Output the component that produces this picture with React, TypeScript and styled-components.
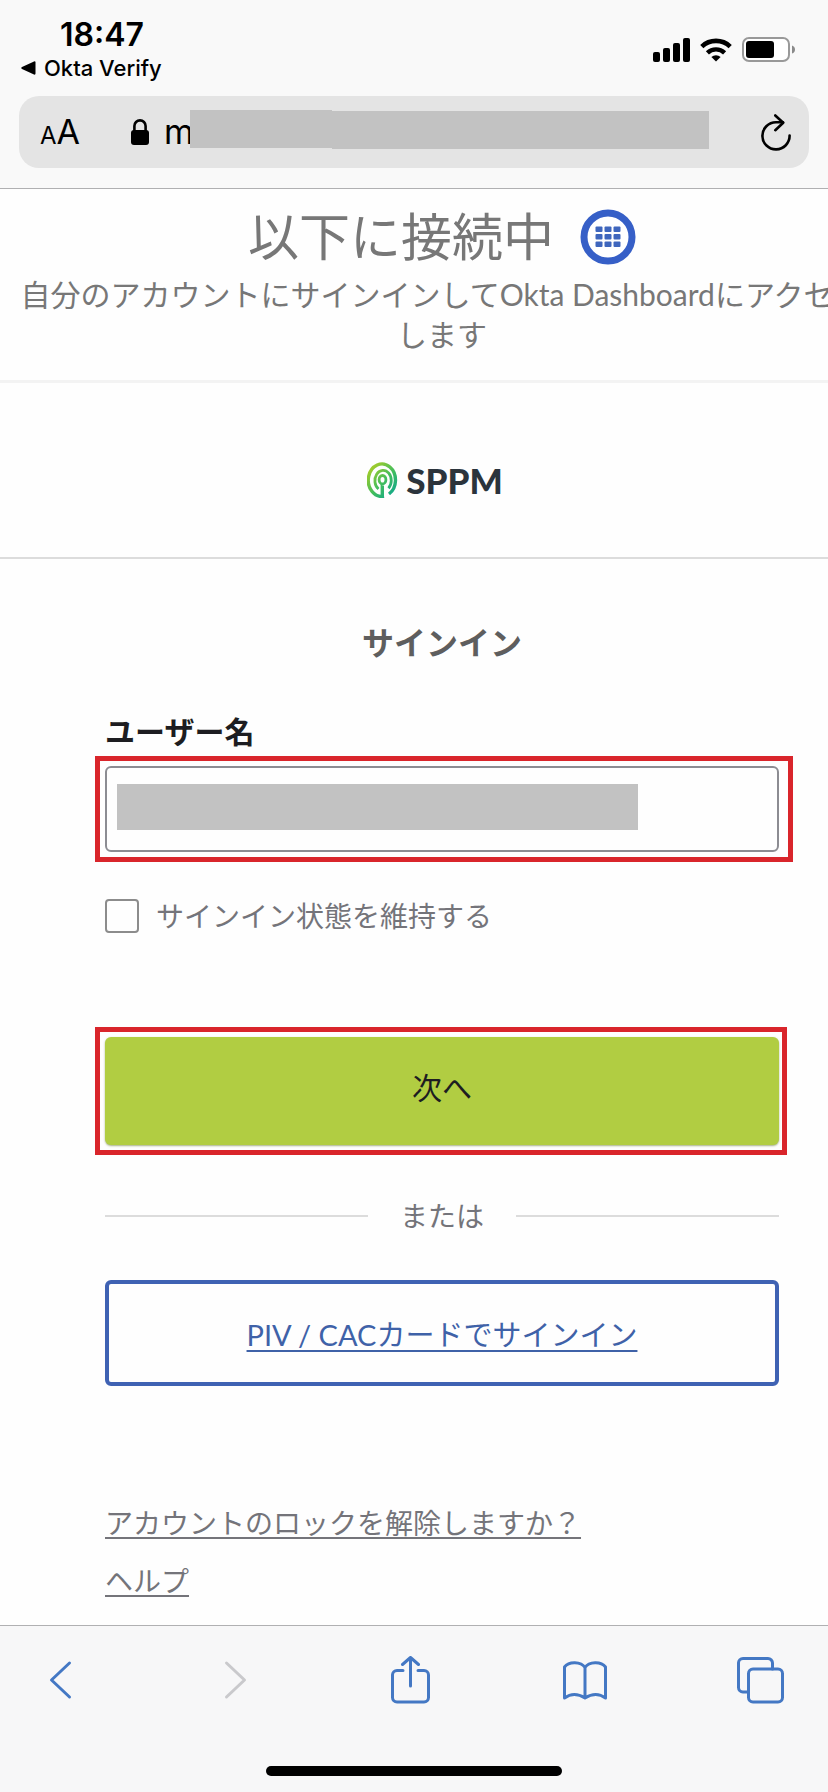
import React from "react";
import styled, { createGlobalStyle } from "styled-components";

const GlobalStyle = createGlobalStyle`
  *, *::before, *::after { box-sizing: border-box; }
  body {
    margin: 0;
    background: #fefefe;
    font-family: Lato, "Noto Sans CJK JP", sans-serif;
    overflow-x: hidden;
  }
  h1, h2, p { margin: 0; font-weight: 400; }
`;

const systemFont = `Inter, "Noto Sans CJK JP", sans-serif`;

const Screen = styled.div`
  display: flex;
  flex-direction: column;
  min-height: 100vh;
  overflow: hidden;
`;

/* ---------- browser header ---------- */

const BrowserHeader = styled.header`
  background: #f9f9f9;
  border-bottom: 1px solid #b0b0b2;
  padding: 16px 19px 20px;
  font-family: ${systemFont};
  color: #000;
`;

const StatusBar = styled.div`
  display: flex;
  justify-content: space-between;
  align-items: flex-start;
  height: 80px;
`;

const Clock = styled.time`
  display: block;
  padding-left: 41px;
  font-size: 32px;
  font-weight: 600;
  line-height: 38px;
`;

const BackToApp = styled.a`
  display: flex;
  align-items: center;
  gap: 8px;
  padding-left: 2px;
  font-size: 22px;
  font-weight: 500;
  line-height: 28px;
  color: inherit;
  text-decoration: none;
`;

const StatusIcons = styled.div`
  display: flex;
  align-items: center;
  gap: 10px;
  padding: 21px 14px 0 0;
`;

const AddressBar = styled.div`
  display: flex;
  align-items: center;
  height: 72px;
  padding: 0 14px 0 21px;
  border-radius: 20px;
  background: #e4e4e4;
`;

const IconButton = styled.button<{ $size: number }>`
  display: flex;
  align-items: center;
  justify-content: center;
  flex: none;
  width: ${(p) => p.$size}px;
  height: ${(p) => p.$size}px;
  padding: 0;
  border: 0;
  background: none;
`;

const TextSizeButton = styled.button`
  flex: none;
  width: 91px;
  padding: 4px 0 0;
  border: 0;
  background: none;
  font-family: ${systemFont};
  font-size: 34px;
  line-height: 40px;
  text-align: left;
  color: #000;
`;

const SmallA = styled.span`
  font-size: 24px;
`;

const Address = styled.div`
  display: flex;
  align-items: center;
  flex: 1;
  min-width: 0;
  padding: 0 48px 0 15px;
  font-size: 34px;
  line-height: 40px;
`;

const AddressMask = styled.div`
  display: flex;
  flex: 1;
  height: 39px;
  margin: 0 0 5px -4px;
  position: relative;
`;

const MaskStart = styled.span`
  width: 142px;
  margin-bottom: 1px;
  background: #c2c2c2;
`;

const MaskEnd = styled.span`
  flex: 1;
  margin-top: 1px;
  background: #c2c2c2;
`;

/* ---------- sign-in page ---------- */

/* The page is slightly wider than the window and runs past its right edge. */
const SignInPage = styled.main`
  flex: 1;
  width: calc(100% + 56px);
`;

const AppBanner = styled.section`
  padding: 20px 20px 25px;
  border-bottom: 3px solid #f3f3f3;
  text-align: center;
  color: #777;
`;

const BannerTitle = styled.div`
  display: flex;
  justify-content: center;
  align-items: center;
  gap: 26px;
  h1 {
    font-size: 51px;
    line-height: 56px;
  }
`;

const BannerText = styled.p`
  margin-top: 9px;
  padding-bottom: 1px;
  font-size: 30px;
  line-height: 40px;
  white-space: nowrap;
`;

const LogoBar = styled.section`
  display: flex;
  justify-content: center;
  align-items: center;
  gap: 8px;
  padding: 78px 14px 58px 0;
  border-bottom: 2px solid #dcdcdc;
`;

const LogoName = styled.span`
  font-family: Lato, sans-serif;
  font-size: 35px;
  font-weight: 900;
  line-height: 38px;
  color: #2b343c;
`;

const Form = styled.form`
  display: flex;
  flex-direction: column;
  padding: 64px 105px 24px;
`;

const FormTitle = styled.h2`
  font-size: 32px;
  font-weight: 700;
  line-height: 40px;
  text-align: center;
  color: #5e5e5e;
`;

const FieldLabel = styled.label`
  margin: 48px 0 15px;
  font-size: 30px;
  font-weight: 700;
  line-height: 40px;
  color: #1d1d21;
`;

const Highlight = styled.div<{ $right: number }>`
  position: relative;
  &::after {
    content: "";
    position: absolute;
    inset: -10px ${(p) => -p.$right}px -10px -10px;
    border: 5px solid #d9252b;
    pointer-events: none;
  }
`;

const TextInput = styled.input`
  display: block;
  width: 100%;
  height: 86px;
  padding: 0 12px;
  border: 2px solid #8c8c92;
  border-radius: 6px;
  background: #fefefe;
  font: inherit;
  font-size: 30px;
`;

const InputMask = styled.span`
  position: absolute;
  top: 18px;
  left: 12px;
  width: 521px;
  height: 46px;
  background: #c2c2c2;
`;

const RememberRow = styled.label`
  display: flex;
  align-items: center;
  gap: 17px;
  margin: 44px 0 101px;
  font-size: 28px;
  line-height: 40px;
  color: #74747a;
`;

const Checkbox = styled.input`
  appearance: none;
  width: 34px;
  height: 34px;
  margin: 0;
  border: 2px solid #8c8c8c;
  border-radius: 4px;
  background: #fefefe;
`;

const SubmitButton = styled.button`
  display: block;
  width: 100%;
  height: 108px;
  padding: 0 0 10px;
  border: 0;
  border-radius: 6px;
  background: #b1cd42;
  box-shadow: 0 1px 2px rgba(80, 100, 20, 0.5);
  font: inherit;
  font-size: 30px;
  color: #1d1d21;
`;

const Divider = styled.div`
  display: flex;
  align-items: center;
  gap: 32px;
  margin: 51px 0 44px;
  font-size: 28px;
  line-height: 40px;
  color: #74747a;
  &::before,
  &::after {
    content: "";
    flex: 1;
    height: 2px;
    background: #dcdcdc;
  }
`;

const CardLink = styled.a`
  display: flex;
  align-items: center;
  justify-content: center;
  height: 106px;
  padding-top: 4px;
  border: 4px solid #3f62b3;
  border-radius: 6px;
  font-size: 29px;
  line-height: 40px;
  color: #3f62a8;
  text-decoration: underline 2px;
  text-underline-offset: 4px;
`;

const HelpLinks = styled.nav`
  display: flex;
  flex-direction: column;
  align-items: flex-start;
  gap: 18px;
  margin-top: 117px;
`;

const HelpLink = styled.a`
  font-size: 28px;
  line-height: 40px;
  color: #74747a;
  text-decoration: underline 2px;
  text-underline-offset: 3px;
`;

/* ---------- browser toolbar ---------- */

const BrowserFooter = styled.footer`
  display: flex;
  flex-direction: column;
  align-items: center;
  padding: 30px 0 16px;
  border-top: 1px solid #b0b0b2;
  background: #f7f7f8;
`;

const Toolbar = styled.nav`
  display: flex;
  justify-content: space-between;
  align-self: stretch;
  padding: 0 44px 0 36px;
`;

const HomeIndicator = styled.div`
  width: 296px;
  height: 10px;
  margin-top: 62px;
  border-radius: 5px;
  background: #000;
`;

const blue = "#4478c4";

const ToolIcon = ({ color = blue, children }: { color?: string; children: React.ReactNode }) => (
  <svg
    width="48"
    height="48"
    viewBox="0 0 48 48"
    fill="none"
    stroke={color}
    strokeWidth="3"
    strokeLinecap="round"
    strokeLinejoin="round"
    aria-hidden="true"
  >
    {children}
  </svg>
);

const SignalIcon = () => (
  <svg width="37" height="24" viewBox="0 0 37 24" aria-hidden="true">
    <rect x="0" y="14" width="7" height="10" rx="2" />
    <rect x="10" y="10" width="7" height="14" rx="2" />
    <rect x="20" y="5" width="7" height="19" rx="2" />
    <rect x="30" y="0" width="7" height="24" rx="2" />
  </svg>
);

const WifiIcon = () => (
  <svg width="32" height="24" viewBox="0 0 32 24" fill="none" stroke="#000" aria-hidden="true">
    <path d="M1.8 8.6a20.5 20.5 0 0 1 28.4 0" strokeWidth="4.6" />
    <path d="M7.4 14.8a12.4 12.4 0 0 1 17.2 0" strokeWidth="4.4" />
    <path d="M16 23.6l-4.6-4.6a6.6 6.6 0 0 1 9.2 0z" fill="#000" stroke="none" />
  </svg>
);

const BatteryIcon = () => (
  <svg width="53" height="25" viewBox="0 0 53 25" aria-hidden="true">
    <rect x="1" y="1" width="46" height="23" rx="6" fill="#fff" stroke="#999" strokeWidth="2" />
    <rect x="4" y="4" width="28" height="17" rx="3" />
    <path d="M50 8.5q3 1 3 4t-3 4z" fill="#8a8a8a" />
  </svg>
);

const LockIcon = () => (
  <svg width="18" height="26" viewBox="0 0 18 26" aria-hidden="true">
    <path d="M3.4 12V7a5.6 5.6 0 0 1 11.2 0v5" fill="none" stroke="#000" strokeWidth="2.6" />
    <rect x="0" y="11" width="18" height="15" rx="3" />
  </svg>
);

const ReloadIcon = () => (
  <svg
    width="30"
    height="37"
    viewBox="0 0 30 37"
    fill="none"
    stroke="#000"
    strokeWidth="2.6"
    strokeLinecap="round"
    strokeLinejoin="round"
    aria-hidden="true"
  >
    <path d="M28.6 21.5A13.6 13.6 0 1 1 15 8.2h7" />
    <path d="M14.3 1.5l7.9 7.2-7.9 7.5" />
  </svg>
);

const DashboardIcon = () => (
  <svg width="56" height="56" viewBox="0 0 56 56" aria-hidden="true">
    <circle cx="28" cy="28" r="24" fill="#fff" stroke="#365fc7" strokeWidth="7" />
    {[0, 1, 2].map((row) =>
      [0, 1, 2].map((col) => (
        <rect
          key={`${row}${col}`}
          x={15.5 + col * 9}
          y={17.5 + row * 7.5}
          width="7"
          height="5.6"
          rx="1"
          fill="#3f66bd"
        />
      ))
    )}
  </svg>
);

const LogoMark = () => (
  <svg width="31" height="36" viewBox="0 0 31 36" fill="none" aria-hidden="true">
    <defs>
      <linearGradient id="mark" gradientUnits="userSpaceOnUse" x1="2" y1="4" x2="30" y2="30">
        <stop offset="0.1" stopColor="#9ccb2e" />
        <stop offset="0.55" stopColor="#43bd5c" />
        <stop offset="1" stopColor="#0fa88c" />
      </linearGradient>
    </defs>
    <g stroke="url(#mark)" strokeWidth="3.4">
      <path d="M17 34.2A13.6 16.2 0 1 1 22 32" />
      <path d="M11.5 27A8.2 10.2 0 1 1 21.5 26.2" strokeWidth="2.8" />
      <path d="M15.300 35.500V23.500L15.400 23.500" />
      <ellipse cx="15.5" cy="17.7" rx="3.4" ry="4.2" strokeWidth="2.8" />
    </g>
  </svg>
);

export default function App() {
  return (
    <>
      <GlobalStyle />
      <Screen>
        <BrowserHeader>
          <StatusBar>
            <div>
              <Clock>18:47</Clock>
              <BackToApp href="#okta-verify">
                <svg width="15" height="14" viewBox="0 0 15 14" aria-hidden="true">
                  <path d="M1 6l12-5.6q1.5-.5 1.500 1v11.2q0 1.5-1.5 1L1 8q-1.5-1 0-2z" />
                </svg>
                Okta Verify
              </BackToApp>
            </div>
            <StatusIcons>
              <SignalIcon />
              <WifiIcon />
              <BatteryIcon />
            </StatusIcons>
          </StatusBar>
          <AddressBar>
            <TextSizeButton type="button">
              <SmallA>A</SmallA>A
            </TextSizeButton>
            <LockIcon />
            <Address>
              m
              <AddressMask>
                <MaskStart />
                <MaskEnd />
              </AddressMask>
            </Address>
            <IconButton type="button" $size={38} aria-label="再読み込み">
              <ReloadIcon />
            </IconButton>
          </AddressBar>
        </BrowserHeader>

        <SignInPage>
          <AppBanner>
            <BannerTitle>
              <h1>以下に接続中</h1>
              <DashboardIcon />
            </BannerTitle>
            <BannerText>
              自分のアカウントにサインインしてOkta Dashboardにアクセス
              <br />
              します
            </BannerText>
          </AppBanner>

          <LogoBar>
            <LogoMark />
            <LogoName>SPPM</LogoName>
          </LogoBar>

          <Form>
            <FormTitle>サインイン</FormTitle>
            <FieldLabel htmlFor="username">ユーザー名</FieldLabel>
            <Highlight $right={14}>
              <TextInput id="username" type="text" />
              <InputMask />
            </Highlight>
            <RememberRow>
              <Checkbox type="checkbox" />
              サインイン状態を維持する
            </RememberRow>
            <Highlight $right={8}>
              <SubmitButton type="button">次へ</SubmitButton>
            </Highlight>
            <Divider>または</Divider>
            <CardLink href="#piv">PIV / CACカードでサインイン</CardLink>
            <HelpLinks>
              <HelpLink href="#unlock">アカウントのロックを解除しますか？</HelpLink>
              <HelpLink href="#help">ヘルプ</HelpLink>
            </HelpLinks>
          </Form>
        </SignInPage>

        <BrowserFooter>
          <Toolbar>
            <IconButton type="button" $size={48} aria-label="戻る">
              <ToolIcon>
                <path d="M33.5 7L15.5 24l18 17" />
              </ToolIcon>
            </IconButton>
            <IconButton type="button" $size={48} aria-label="進む" disabled>
              <ToolIcon color="#c9c9cc">
                <path d="M15.5 7l18 17-18 17" />
              </ToolIcon>
            </IconButton>
            <IconButton type="button" $size={48} aria-label="共有">
              <ToolIcon>
                <path d="M17 14.5h-6a4.5 4.5 0 0 0-4.5 4.5V41.5a4.5 4.5 0 0 0 4.5 4.500h27a4.5 4.5 0 0 0 4.5-4.5V19a4.5 4.5 0 0 0-4.5-4.5h-6" />
                <path d="M24.5 30V1.5M16.5 8.5l8-7 8 7" />
              </ToolIcon>
            </IconButton>
            <IconButton type="button" $size={48} aria-label="ブックマーク">
              <ToolIcon>
                <path d="M24 11.5C20 5.5 8 5 3.5 11v31q9.500-7 20.5 0 11-7 20.5 0V11C40 5 28 5.5 24 11.5zV42" />
              </ToolIcon>
            </IconButton>
            <IconButton type="button" $size={48} aria-label="タブ">
              <ToolIcon>
                <path d="M12 36H7a4.5 4.5 0 0 1-4.5-4.5V7A4.5 4.5 0 0 1 7 2.5h25a4.5 4.5 0 0 1 4.5 4.5V13" />
                <rect x="12.5" y="13" width="34" height="33" rx="4.5" />
              </ToolIcon>
            </IconButton>
          </Toolbar>
          <HomeIndicator />
        </BrowserFooter>
      </Screen>
    </>
  );
}
